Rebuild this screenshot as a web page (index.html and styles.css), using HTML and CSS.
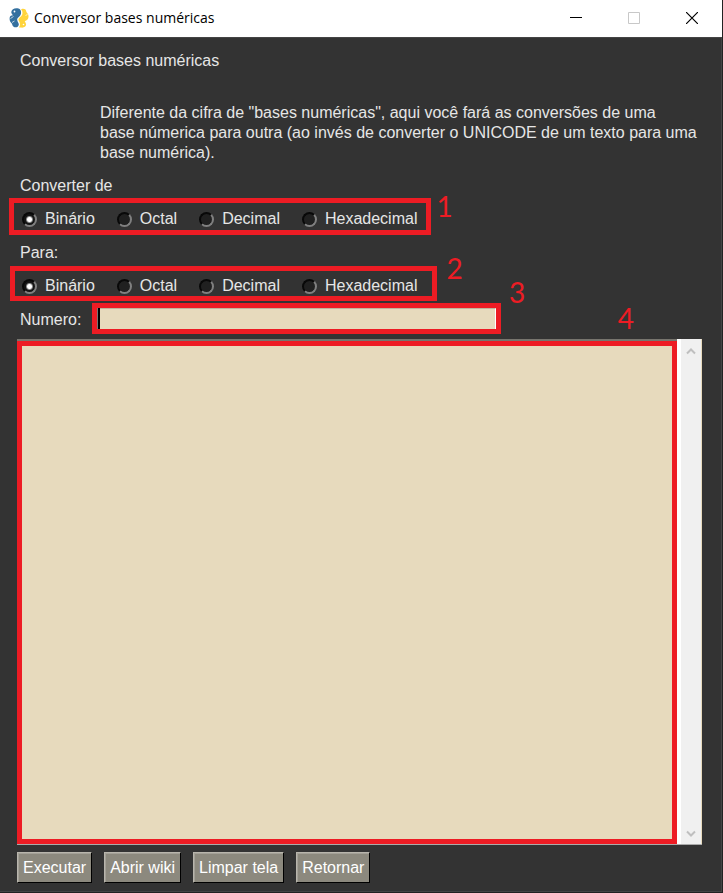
FILE: index.html
```html
<!DOCTYPE html>
<html lang="pt-BR">
<head>
<meta charset="utf-8">
<meta name="viewport" content="width=device-width, initial-scale=1">
<title>Conversor bases numéricas</title>
<link rel="stylesheet" href="styles.css">
</head>
<body>
<div class="window">
  <header class="titlebar">
    <svg class="logo" viewBox="0 0 20 20" aria-hidden="true">
      <path fill="#34709f" d="M9.500.5C6-.3 2.500 1 2.300 4c0 1.500.8 2.400 1.700 3.300C1.800 7.300.6 8.500.6 10.500c0 2 .6 3.500 2 4.700 1 1.400.6 2.600 2 3.600 1.800 1.200 5 .4 5.200-2 .2-2-1.600-3-1.600-5.300C8.200 9.500 11.500 8.500 12 5.500 12.300 3 11.500 1 9.500.5z"/>
      <path fill="#ffd43b" d="M11.500 19.500c3.500.7 6-1 5.500-3.500-.2-1.300-.8-2-1.300-2.800 2.200-.5 3.600-2.200 3.800-4.200.2-2.200-.5-3-1.600-4.200-1-1.300-.4-2.500-1.800-3.500-1.500-1-3.600-.6-4 .4 1.500 1 1.700 3.600.9 5.300-.8 2-3.400 2.600-3.600 4.500 0 1.500 1.600 2.500 1.600 4.800 0 1.200-.4 2.400-1.200 2.900.5.200 1 .3 1.700.3z"/>
      <circle fill="#fff" cx="5.500" cy="3.500" r=".9"/>
      <circle fill="#fff" cx="14.500" cy="16.500" r=".8"/>
      <path fill="none" stroke="#fff" stroke-width=".7" d="M1.500 10.500l3-2M3 14.500l2.500-1.500M18.500 6.500l-2 1"/>
    </svg>
    <span class="caption">Conversor bases numéricas</span>
    <button class="winbtn" type="button" aria-label="Minimizar"><svg viewBox="0 0 12 12"><path stroke="#000" d="M0 5.500h12"/></svg></button>
    <button class="winbtn" type="button" aria-label="Maximizar" disabled><svg viewBox="0 0 12 12"><path fill="none" stroke="#c8c8c8" d="M.5.5h11v11H.5z"/></svg></button>
    <button class="winbtn" type="button" aria-label="Fechar"><svg viewBox="0 0 12 12"><path stroke="#000" stroke-width="1.200" d="M0 0l12 12M12 0L0 12"/></svg></button>
  </header>
  <main class="content">
    <h1 class="heading">Conversor bases numéricas</h1>
    <p class="intro">Diferente da cifra de "bases numéricas", aqui você fará as conversões de uma<br>base númerica para outra (ao invés de converter o UNICODE de um texto para uma<br>base numérica).</p>

    <p class="text" id="from">Converter de</p>
    <div class="mark options options-from" role="radiogroup" aria-labelledby="from">
      <label class="option"><input type="radio" name="from" checked>Binário</label>
      <label class="option"><input type="radio" name="from">Octal</label>
      <label class="option"><input type="radio" name="from">Decimal</label>
      <label class="option"><input type="radio" name="from">Hexadecimal</label>
      <span class="number number-1">1</span>
    </div>

    <p class="text" id="to">Para:</p>
    <div class="mark options options-to" role="radiogroup" aria-labelledby="to">
      <label class="option"><input type="radio" name="to" checked>Binário</label>
      <label class="option"><input type="radio" name="to">Octal</label>
      <label class="option"><input type="radio" name="to">Decimal</label>
      <label class="option"><input type="radio" name="to">Hexadecimal</label>
      <span class="number number-2">2</span>
    </div>

    <div class="entry-row">
      <label class="text" for="numero">Numero:</label>
      <div class="mark entry">
        <span class="caret"></span>
        <input class="field" id="numero" type="text">
        <span class="number number-3">3</span>
      </div>
    </div>

    <div class="output">
      <div class="mark output-mark">
        <textarea class="area" aria-label="Resultado"></textarea>
        <span class="number number-4">4</span>
      </div>
      <div class="scrollbar">
        <svg viewBox="0 0 10 8"><path d="M1 6.500l4-4 4 4"/></svg>
        <svg viewBox="0 0 10 8"><path d="M1 1.500l4 4 4-4"/></svg>
      </div>
    </div>

    <div class="actions">
      <button class="action" type="button">Executar</button>
      <button class="action" type="button">Abrir wiki</button>
      <button class="action" type="button">Limpar tela</button>
      <button class="action" type="button">Retornar</button>
    </div>
  </main>
</div>
</body>
</html>
```
FILE: styles.css
```css
* { box-sizing: border-box; }

body {
  margin: 0;
  background: #222;
  color: #e6e6e6;
  font: 16px/20px "Liberation Sans", Arial, sans-serif;
}

.window {
  display: flex;
  flex-direction: column;
  min-height: 100vh;
  margin-right: 1px;
  border-bottom: 1px solid #222;
}

.titlebar {
  display: flex;
  align-items: center;
  height: 37px;
  padding: 0 1px 2px 9px;
  background: #fff;
  color: #000;
}

.logo { width: 20px; height: 20px; margin-right: 5px; }

.caption {
  flex: 1;
  font: 14px/20px "Open Sans", "Noto Sans", sans-serif;
}

.winbtn {
  display: grid;
  place-items: center;
  width: 58px;
  height: 35px;
  padding: 0;
  border: 0;
  background: none;
}

.winbtn svg { width: 12px; height: 12px; }

.content {
  flex: 1;
  display: flex;
  flex-direction: column;
  padding: 13px 19px 8px 17px;
  background: #333;
  border: 1px solid #444;
  border-left: 0;
}

.heading, .text { margin: 0 0 0 3px; }

.heading { font-size: 16px; font-weight: normal; }

.intro { margin: 32px 0 13px 83px; }

.mark { position: relative; border: 5px solid #ed1c24; }

.options {
  display: flex;
  align-items: center;
  align-self: flex-start;
  gap: 22px;
  padding-top: 5px;
}

.options-from { height: 37px; margin: 2px 0 8px -8px; padding-left: 8px; padding-right: 9px; }
.options-to { height: 35px; margin: 3px 0 2px -7px; padding-left: 7px; padding-right: 15px; }

.option { display: flex; align-items: center; gap: 8px; }

.option input {
  appearance: none;
  width: 15px;
  height: 15px;
  margin: 0;
  border: 2px solid;
  border-color: #080808 #808080 #808080 #080808;
  border-radius: 50%;
  background: #202020;
}

.option input:checked { background: radial-gradient(circle, #fff 2px, #151515 4px); }

.number {
  position: absolute;
  color: #ed1c24;
  font: 28px/32px Lato, "Open Sans", sans-serif;
}

.number-1 { left: calc(100% + 10px); top: -13px; }
.number-2 { left: calc(100% + 14px); top: -19px; }
.number-3 { left: calc(100% + 13px); top: -32px; }
.number-4 { right: 38px; top: -44px; }

.entry-row { display: flex; align-items: center; }
.entry-row .text { width: 72px; padding-top: 2px; }

.entry { display: flex; width: 409px; height: 31px; background: #e7dabd; }

.caret { width: 3px; background: #000; border-left: 1px solid #777; }

.field {
  flex: 1;
  min-width: 0;
  padding: 0 4px;
  border: 0;
  border-top: 1px solid #c0b59c;
  border-right: 1px solid #fff;
  outline: 0;
  background: none;
  font: inherit;
}

.output {
  flex: 1;
  display: flex;
  margin-top: 5px;
  border-top: 2px solid #77756e;
  border-bottom: 1px solid #aaa;
}

.output-mark { flex: 1; display: flex; }

.area {
  flex: 1;
  min-width: 0;
  padding: 4px;
  border: 0;
  outline: 0;
  resize: none;
  background: #e7dabd;
  font: inherit;
}

.scrollbar {
  display: flex;
  flex-direction: column;
  align-items: center;
  justify-content: space-between;
  width: 25px;
  margin-top: -2px;
  padding: 8px 0 6px;
  border-left: 4px solid #fff;
  border-right: 1px solid #e7dabd;
  background: #f0f0f0;
}

.scrollbar svg { width: 10px; height: 8px; }
.scrollbar path { fill: none; stroke: #bfbfbf; stroke-width: 2; }

.actions { display: flex; gap: 12px; margin-top: 7px; }

.action {
  height: 31px;
  padding: 0 5px;
  border: 1px solid;
  border-color: #b8b5ac #000 #000 #b8b5ac;
  background: #8c897e;
  box-shadow: inset 1px 1px #a3a097;
  color: #fff;
  font: inherit;
}
```
